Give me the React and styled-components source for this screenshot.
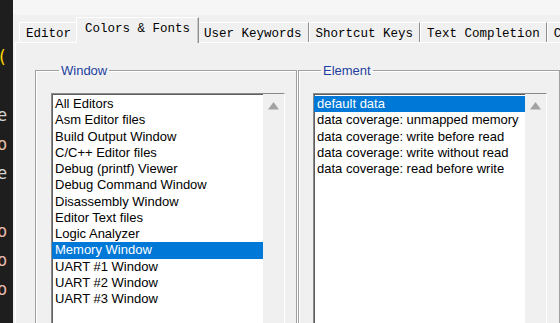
import React from "react";
import styled, { createGlobalStyle } from "styled-components";

const GlobalStyle = createGlobalStyle`
  html, body {
    margin: 0;
    padding: 0;
    overflow: hidden;
    background: #f0f0f0;
  }
`;

const Screen = styled.div`
  display: flex;
  width: 560px;
  height: 323px;
  overflow: hidden;
  font-family: "Liberation Sans", Arial, sans-serif;
`;

const EditorStrip = styled.div`
  width: 13px;
  flex-shrink: 0;
  background: #1e1e1e;
  padding-top: 43px;
  overflow: hidden;
  box-sizing: border-box;
`;

const CodeLine = styled.div`
  height: 29px;
  line-height: 29px;
  font-family: "DejaVu Sans Mono", monospace;
  font-size: ${(p) => p.$size || 17}px;
  color: ${(p) => p.$color || "#d4d4d4"};
  margin-left: ${(p) => p.$shift || -3}px;
  white-space: nowrap;
`;

const Dialog = styled.div`
  flex: 1;
  display: flex;
  flex-direction: column;
  background: #f0f0f0;
  min-width: 0;
  overflow: hidden;
`;

const TitleGap = styled.div`
  height: 15px;
  flex-shrink: 0;
  background: #f6f6f6;
`;

const TabRow = styled.div`
  display: flex;
  align-items: flex-end;
  height: 27px;
  flex-shrink: 0;
  padding-left: 6px;
  position: relative;
  z-index: 1;
`;

const Tab = styled.div`
  box-sizing: border-box;
  height: ${(p) => (p.$active ? 26 : 20)}px;
  margin: 0 ${(p) => (p.$active ? -2 : 0)}px
    ${(p) => (p.$active ? -1 : 0)}px;
  padding: ${(p) => (p.$active ? "3px 8px 0" : "3px 6px 0")};
  position: relative;
  z-index: ${(p) => (p.$active ? 2 : 1)};
  background: #f0f0f0;
  border-top: 1px solid #ffffff;
  border-left: 1px solid #ffffff;
  border-right: 1px solid #8e8e8e;
  box-shadow: ${(p) => (p.$active ? "inset -1px 0 #c8c8c8" : "none")};
  font-family: "Liberation Mono", "Courier New", monospace;
  font-size: 12.5px;
  line-height: 16px;
  color: #000;
  white-space: nowrap;
  flex-shrink: 0;
`;

const Page = styled.div`
  flex: 1;
  min-height: 0;
  margin-left: 2px;
  border-top: 1px solid #ffffff;
  border-left: 1px solid #ffffff;
  display: grid;
  grid-template-columns: 262px 262px;
  gap: 1px;
  padding: 20px 0 0 19px;
  align-items: start;
`;

const GroupBox = styled.fieldset`
  box-sizing: border-box;
  width: 100%;
  margin: 0;
  min-width: 0;
  padding: 15px 0 0 ${(p) => p.$inset}px;
  border: 1px solid #a0a0a0;
  box-shadow: inset 1px 1px #ffffff, 1px 1px #ffffff;
  height: 300px;
`;

const Legend = styled.legend`
  margin-left: 8px;
  padding: 0 2px;
  font-size: 13px;
  line-height: 15px;
  color: #1e3f9e;
`;

const ListBox = styled.div`
  display: flex;
  width: 234px;
  height: 280px;
  box-sizing: border-box;
  border: 1px solid;
  border-color: #8a8a8a #ffffff #ffffff #8a8a8a;
  box-shadow: inset 1px 1px #5f5f5f, inset -1px -1px #e3e3e3;
  background: #ffffff;
`;

const Items = styled.div`
  flex: 1;
  padding-top: 2px;
`;

const Item = styled.div`
  height: 16.25px;
  line-height: 16.25px;
  padding-left: 3px;
  font-size: 13px;
  color: ${(p) => (p.$selected ? "#ffffff" : "#000000")};
  background: ${(p) => (p.$selected ? "#0078d7" : "transparent")};
  white-space: nowrap;
`;

const ScrollBar = styled.div`
  width: 21px;
  flex-shrink: 0;
  background: #f0f0f0;
  display: flex;
  justify-content: center;
  align-items: flex-start;
  padding-top: 8px;
  box-sizing: border-box;
`;

const UpArrow = () => (
  <svg width="11" height="8" viewBox="0 0 11 8">
    <polygon points="5.5,0 11,7.5 0,7.5" fill="#a3a3a3" />
  </svg>
);

const tabs = [
  "Editor",
  "Colors & Fonts",
  "User Keywords",
  "Shortcut Keys",
  "Text Completion",
  "Code Completion",
];

const windows = [
  "All Editors",
  "Asm Editor files",
  "Build Output Window",
  "C/C++ Editor files",
  "Debug (printf) Viewer",
  "Debug Command Window",
  "Disassembly Window",
  "Editor Text files",
  "Logic Analyzer",
  "Memory Window",
  "UART #1 Window",
  "UART #2 Window",
  "UART #3 Window",
];

const elements = [
  "default data",
  "data coverage: unmapped memory",
  "data coverage: write before read",
  "data coverage: write without read",
  "data coverage: read before write",
];

const code = [
  { text: "(", color: "#ffd700", shift: 0 },
  { text: "" },
  { text: "e" },
  { text: "o", color: "#e8c0a8" },
  { text: "e" },
  { text: "" },
  { text: "o", color: "#e8b8b0" },
  { text: "o", color: "#e8b8b0" },
  { text: "o", color: "#e8b8b0" },
];

function List({ items, selected }) {
  return (
    <ListBox>
      <Items>
        {items.map((item) => (
          <Item key={item} $selected={item === selected}>
            {item}
          </Item>
        ))}
      </Items>
      <ScrollBar>
        <UpArrow />
      </ScrollBar>
    </ListBox>
  );
}

export default function App() {
  return (
    <Screen>
      <GlobalStyle />
      <EditorStrip>
        {code.map((line, i) => (
          <CodeLine key={i} $color={line.color} $shift={line.shift}>
            {line.text || "\u00a0"}
          </CodeLine>
        ))}
      </EditorStrip>
      <Dialog>
        <TitleGap />
        <TabRow>
          {tabs.map((t) => (
            <Tab key={t} $active={t === "Colors & Fonts"}>
              {t}
            </Tab>
          ))}
        </TabRow>
        <Page>
          <GroupBox $inset={15}>
            <Legend>Window</Legend>
            <List items={windows} selected="Memory Window" />
          </GroupBox>
          <GroupBox $inset={14}>
            <Legend>Element</Legend>
            <List items={elements} selected="default data" />
          </GroupBox>
        </Page>
      </Dialog>
    </Screen>
  );
}
